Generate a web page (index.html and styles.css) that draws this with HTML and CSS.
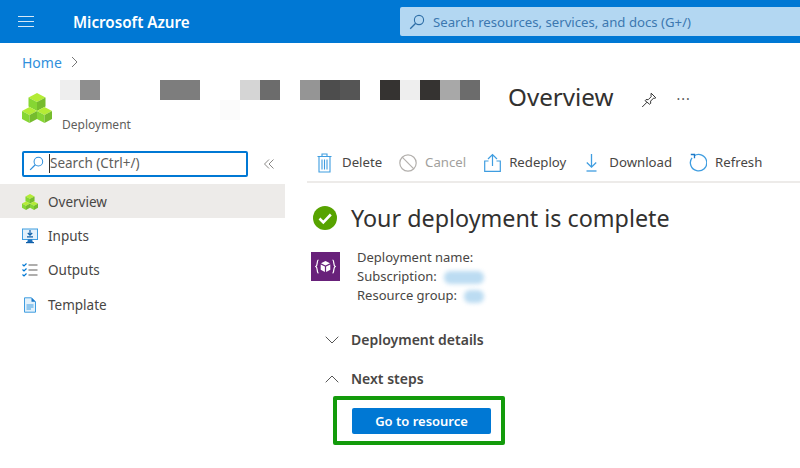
FILE: index.html
```html
<!DOCTYPE html>
<html lang="en">
<head>
  <meta charset="UTF-8" />
  <title>Deployment - Microsoft Azure</title>
  <link rel="stylesheet" href="styles.css">
</head>
<body>
  <svg class="defs" width="0" height="0">
    <symbol id="cubes" viewBox="0 0 30 30">
      <polygon points="15,0 23.500,4.500 15,9 6.500,4.500" fill="#b4ec36"/>
      <polygon points="6.500,4.500 15,9 15,18 6.500,13.500" fill="#86d633"/>
      <polygon points="23.500,4.500 15,9 15,18 23.500,13.500" fill="#76bc2d"/>
      <polygon points="7.500,14 15,18 7.500,22 0,18" fill="#b4ec36"/>
      <polygon points="0,18 7.500,22 7.500,30 0,26" fill="#86d633"/>
      <polygon points="15,18 7.500,22 7.500,30 15,26" fill="#76bc2d"/>
      <polygon points="22.500,14 30,18 22.500,22 15,18" fill="#b4ec36"/>
      <polygon points="15,18 22.500,22 22.500,30 15,26" fill="#86d633"/>
      <polygon points="30,18 22.500,22 22.500,30 30,26" fill="#76bc2d"/>
    </symbol>
    <symbol id="search" viewBox="0 0 16 16">
      <circle cx="10" cy="6" r="4.600" fill="none" stroke="currentColor" stroke-width="1.100"/>
      <path d="M6.700 9.300 1.200 14.800" fill="none" stroke="currentColor" stroke-width="1.300"/>
    </symbol>
  </svg>

  <!-- Top bar -->
  <header class="topbar">
    <svg class="menu-icon" width="16" height="11" viewBox="0 0 16 11"><path d="M0 .5h16M0 5.500h16M0 10.500h16" stroke="#d5e8f7" stroke-width="1"/></svg>
    <span class="brand">Microsoft Azure</span>
    <div class="global-search">
      <svg class="global-search-icon" width="16" height="16"><use href="#search"/></svg>
      <span>Search resources, services, and docs (G+/)</span>
    </div>
  </header>

  <nav class="breadcrumb">
    <a class="crumb">Home</a>
    <svg width="7" height="12" viewBox="0 0 7 12"><path d="M1 1l5 5-5 5" fill="none" stroke="#777" stroke-width="1"/></svg>
  </nav>

  <!-- Resource title -->
  <section class="resource-head">
    <svg class="resource-icon" width="30" height="30"><use href="#cubes"/></svg>
    <div class="resource-name">
      <div class="mosaic">
        <i class="g1"></i><i class="g2"></i><i></i><i></i><i></i><i class="g3"></i><i class="g3"></i><i></i><i></i><i class="g4"></i><i class="g5"></i><i></i><i class="g6"></i><i class="g7"></i><i class="g8"></i><i></i><i class="g9"></i><i class="g1"></i><i class="g9"></i><i class="g10"></i><i class="g5"></i>
        <i></i><i></i><i></i><i></i><i></i><i></i><i></i><i></i><i class="g0"></i>
      </div>
      <div class="resource-type">Deployment</div>
    </div>
    <h1 class="page-title">Overview</h1>
    <svg class="pin" width="16" height="16" viewBox="0 0 16 16"><path d="M10.200 1.200l4.600 4.600-1 .5-1.200-.2-3 3 .1 2.200-1 1L4 8.600l1-1 2.200.1 3-3-.2-1.200zM6 10.200l-4.800 4.800" fill="none" stroke="#333" stroke-width="1"/></svg>
    <span class="more">···</span>
  </section>

  <div class="layout">
    <!-- Side menu -->
    <aside class="sidebar">
      <div class="side-search-row">
        <div class="side-search">
          <svg class="side-search-icon" width="15" height="15"><use href="#search"/></svg>
          <span class="caret"></span>
          <span>Search (Ctrl+/)</span>
        </div>
        <svg class="collapse" width="10" height="10" viewBox="0 0 10 10"><path d="M5 .5.5 5 5 9.500M9.500.5 5 5l4.500 4.500" fill="none" stroke="#8a8886" stroke-width="1"/></svg>
      </div>
      <ul class="side-nav">
        <li class="side-item active">
          <svg width="16" height="16"><use href="#cubes"/></svg>Overview
        </li>
        <li class="side-item">
          <svg width="16" height="16" viewBox="0 0 16 16"><rect x=".5" y="1" width="15" height="10.500" fill="#e3f1fb" stroke="#3f9de0"/><path d="M8 2v5M5.800 5 8 7.200 10.200 5M5 8.800h6" fill="none" stroke="#0f5fa8" stroke-width="1.200"/><path d="M6 11.500h4l.8 2.500H5.200z" fill="#1b6db8"/><rect x="4" y="14" width="8" height="1.200" fill="#0f5fa8"/></svg>Inputs
        </li>
        <li class="side-item">
          <svg width="16" height="16" viewBox="0 0 16 16"><path d="M6.500 3h9M6.500 8h9M6.500 13h9" stroke="#605e5c" stroke-width="1.200"/><path d="M.5 2.500l1.500 1.500L4.500 1.500M.5 7.500 2 9l2.500-2.500M.5 12.500 2 14l2.500-2.500" fill="none" stroke="#0078d4" stroke-width="1.200"/></svg>Outputs
        </li>
        <li class="side-item">
          <svg width="16" height="16" viewBox="0 0 16 16"><path d="M2.500.8h7l4 4v10.400h-11z" fill="#e3f1fb" stroke="#3f9de0"/><path d="M9.500.8v4h4z" fill="#1b78c8"/><path d="M4.500 8h7M4.500 10h7M4.500 12h4.500" stroke="#3f9de0"/></svg>Template
        </li>
      </ul>
    </aside>

    <main class="content">
      <div class="toolbar">
        <button class="tool tool-delete">
          <svg width="15" height="20" viewBox="0 0 15 20"><path d="M.5 3.500h14M5 3.500V1h5v2.500M2 3.500v15.500h11V3.500M5 6.500v10M7.500 6.500v10M10 6.500v10" fill="none" stroke="#3f9de0" stroke-width="1.100"/></svg><span>Delete</span>
        </button>
        <button class="tool tool-cancel disabled">
          <svg width="18" height="18" viewBox="0 0 18 18"><circle cx="9" cy="9" r="8.200" fill="none" stroke="#b3b0ad" stroke-width="1.200"/><path d="M3.200 3.200l11.600 11.600" stroke="#b3b0ad" stroke-width="1.200"/></svg><span>Cancel</span>
        </button>
        <button class="tool tool-redeploy">
          <svg width="17" height="19" viewBox="0 0 17 19"><path d="M8.500 13V1.500M4 6l4.500-4.500L13 6M4.500 8H.7v10.300h15.600V8h-3.800" fill="none" stroke="#3f9de0" stroke-width="1.200"/></svg><span>Redeploy</span>
        </button>
        <button class="tool tool-download">
          <svg width="11" height="19" viewBox="0 0 11 19"><path d="M5.500 1v13M.8 9.500l4.700 4.700 4.700-4.700" fill="none" stroke="#3f9de0" stroke-width="1.300"/><path d="M.5 18h10" stroke="#3f9de0" stroke-width="1.300"/></svg><span>Download</span>
        </button>
        <button class="tool tool-refresh">
          <svg width="18" height="19" viewBox="0 0 18 19"><path d="M5 2.900a8.200 8.200 0 1 1-2 1.900" fill="none" stroke="#3f9de0" stroke-width="1.300"/><path d="M1.800 1.500h3.700v3.700" fill="none" stroke="#1b78c8" stroke-width="1.300"/></svg><span>Refresh</span>
        </button>
      </div>

      <div class="status">
        <svg width="24" height="24" viewBox="0 0 24 24"><circle cx="12" cy="12" r="12" fill="#57a300"/><path d="M6.500 12.500l3.800 3.800 7.500-7.800" fill="none" stroke="#fff" stroke-width="2.600"/></svg>
        <h2 class="status-title">Your deployment is complete</h2>
      </div>

      <div class="summary">
        <div class="summary-icon">
          <svg width="21" height="15" viewBox="0 0 21 15"><path d="M3.500 1C1.500 1 3 6.500.8 7.500 3 8.500 1.500 14 3.500 14M17.500 1c2 0 .5 5.500 2.700 6.500-2.200 1-.7 6.500-2.700 6.500" fill="none" stroke="#fff" stroke-width="1.200"/><path d="M10.500 2l4.500 2.300-4.500 2.300L6 4.300zM5.700 5.500l4.200 2.100V13l-4.200-2.200zM15.300 5.500l-4.200 2.100V13l4.200-2.200z" fill="#fff"/></svg>
        </div>
        <div class="summary-list">
          <div>Deployment name:</div>
          <div>Subscription:<span class="smudge smudge-wide"></span></div>
          <div>Resource group:<span class="smudge"></span></div>
        </div>
      </div>

      <div class="section-head section-details">
        <svg width="14" height="8" viewBox="0 0 14 8"><path d="M.7.7 7 7 13.300.7" fill="none" stroke="#555" stroke-width="1"/></svg>
        <span>Deployment details</span>
      </div>
      <div class="section-head">
        <svg width="14" height="8" viewBox="0 0 14 8"><path d="M.7 7.300 7 1l6.300 6.300" fill="none" stroke="#555" stroke-width="1"/></svg>
        <span>Next steps</span>
      </div>
      <div class="highlight">
        <button class="primary">Go to resource</button>
      </div>
    </main>
  </div>
</body>
</html>
```

FILE: styles.css
```css
* {
  box-sizing: border-box;
}

body {
  margin: 0;
  font-family: 'Noto Sans', 'Open Sans', sans-serif;
  font-size: 14px;
  color: #323130;
  background-color: white;
  overflow: hidden;
}

.defs {
  display: block;
  height: 0;
}

button {
  font-family: inherit;
  border: none;
  background: none;
  padding: 0;
}

/* Top bar */
.topbar {
  display: flex;
  align-items: center;
  height: 43px;
  padding-left: 18px;
  background-color: #0078d4;
  color: white;
}

.brand {
  margin-left: 39px;
  width: 327px;
  font-size: 15.200px;
  font-weight: 600;
}

.global-search {
  display: flex;
  align-items: center;
  flex: 1;
  height: 29px;
  padding-left: 9px;
  border-radius: 2px 0 0 2px;
  background-color: #b3d7f2;
  color: #3c78b0;
  font-size: 13.200px;
}

.global-search-icon {
  margin-right: 8px;
  color: #2e6ea6;
}

/* Breadcrumb and title */
.breadcrumb {
  display: flex;
  align-items: center;
  gap: 9px;
  height: 20px;
  margin: 9px 0 8px 22px;
}

.crumb {
  color: #2f8fdc;
  font-size: 14px;
}

.resource-head {
  display: flex;
  align-items: flex-start;
  height: 65px;
  padding-left: 22px;
}

.resource-icon {
  margin-top: 13px;
}

.resource-name {
  margin-left: 8px;
}

.mosaic {
  display: grid;
  grid-template-columns: repeat(21, 20px);
  grid-auto-rows: 20px;
}

.g0 { background-color: #fbfbfb; }
.g1 { background-color: #eeeeee; }
.g2 { background-color: #8e8e8e; }
.g3 { background-color: #7d7d7d; }
.g4 { background-color: #d5d5d5; }
.g5 { background-color: #6c6c6c; }
.g6 { background-color: #959595; }
.g7 { background-color: #4d4d4d; }
.g8 { background-color: #555555; }
.g9 { background-color: #353331; }
.g10 { background-color: #a8a8a8; }

.resource-type {
  margin: -3px 0 0 2px;
  font-size: 12px;
  line-height: 16px;
  color: #605e5c;
}

.page-title {
  margin: 0 0 0 28px;
  font-size: 24.200px;
  font-weight: 400;
  line-height: 34px;
}

.pin {
  margin: 12px 0 0 27px;
}

.more {
  margin: 9px 0 0 20px;
  font-size: 14px;
  letter-spacing: 1px;
  line-height: 20px;
  color: #555;
}

/* Layout */
.layout {
  display: flex;
}

.sidebar {
  width: 285px;
  padding-top: 6px;
}

.side-search-row {
  display: flex;
  align-items: center;
  padding-left: 22px;
}

.side-search {
  display: flex;
  align-items: center;
  width: 226px;
  height: 26px;
  padding: 0 0 2px 5px;
  border: 2px solid #0078d4;
  border-radius: 2px;
  color: #605e5c;
  font-size: 13.500px;
}

.side-search-icon {
  color: #2f8fdc;
}

.caret {
  width: 1px;
  height: 19px;
  margin-left: 5px;
  background-color: #323130;
}

.collapse {
  margin-left: 16px;
}

.side-nav {
  list-style: none;
  margin: 7px 0 0;
  padding: 0;
}

.side-item {
  display: flex;
  align-items: center;
  gap: 10px;
  height: 34.300px;
  padding: 1px 0 0 22px;
  font-size: 13.500px;
  color: #484644;
}

.side-item.active {
  background-color: #edebe9;
}

/* Main */
.content {
  flex: 1;
  margin-left: 22px;
}

.toolbar {
  display: flex;
  align-items: center;
  height: 38px;
  padding: 0 0 1px 10px;
  border-bottom: 2px solid #edebe9;
}

.tool {
  display: flex;
  align-items: center;
  gap: 10px;
  font-size: 13.200px;
  color: #484644;
}

.tool span {
  padding-bottom: 2px;
}

.tool.disabled {
  color: #a19f9d;
  gap: 8px;
}

.tool-cancel { margin-left: 17px; }
.tool-redeploy { margin-left: 18px; gap: 8px; }
.tool-download { margin-left: 20px; gap: 12px; }
.tool-refresh { margin-left: 17px; gap: 8px; }

.status {
  display: flex;
  align-items: center;
  gap: 14px;
  height: 34px;
  margin: 18px 0 0 6px;
}

.status-title {
  margin: 0;
  font-size: 23.300px;
  font-weight: 400;
  color: #323130;
}

.summary {
  display: flex;
  margin: 17px 0 0 4px;
}

.summary-icon {
  display: flex;
  align-items: center;
  justify-content: center;
  width: 29px;
  height: 29px;
  background-color: #68217a;
}

.summary-list {
  margin: -4px 0 0 17px;
  font-size: 13px;
  line-height: 19px;
  color: #484644;
}

.smudge {
  display: inline-block;
  width: 20px;
  height: 13px;
  margin-left: 7px;
  vertical-align: -3px;
  border-radius: 6px;
  background-color: #bcdcf2;
  filter: blur(2px);
}

.smudge-wide {
  width: 40px;
}

.section-head {
  display: flex;
  align-items: center;
  gap: 12px;
  height: 39px;
  padding-left: 18px;
  font-weight: 600;
  font-size: 14px;
  color: #484644;
}

.section-details {
  margin-top: 15px;
}

.highlight {
  display: flex;
  align-items: center;
  width: 172px;
  height: 49px;
  margin: -2px 0 0 26px;
  padding-left: 15px;
  border: 4px solid #139b0b;
  border-radius: 2px;
}

.primary {
  width: 139px;
  height: 26px;
  border-radius: 2px;
  background-color: #0078d4;
  color: white;
  font-size: 13px;
  font-weight: 600;
}
```
